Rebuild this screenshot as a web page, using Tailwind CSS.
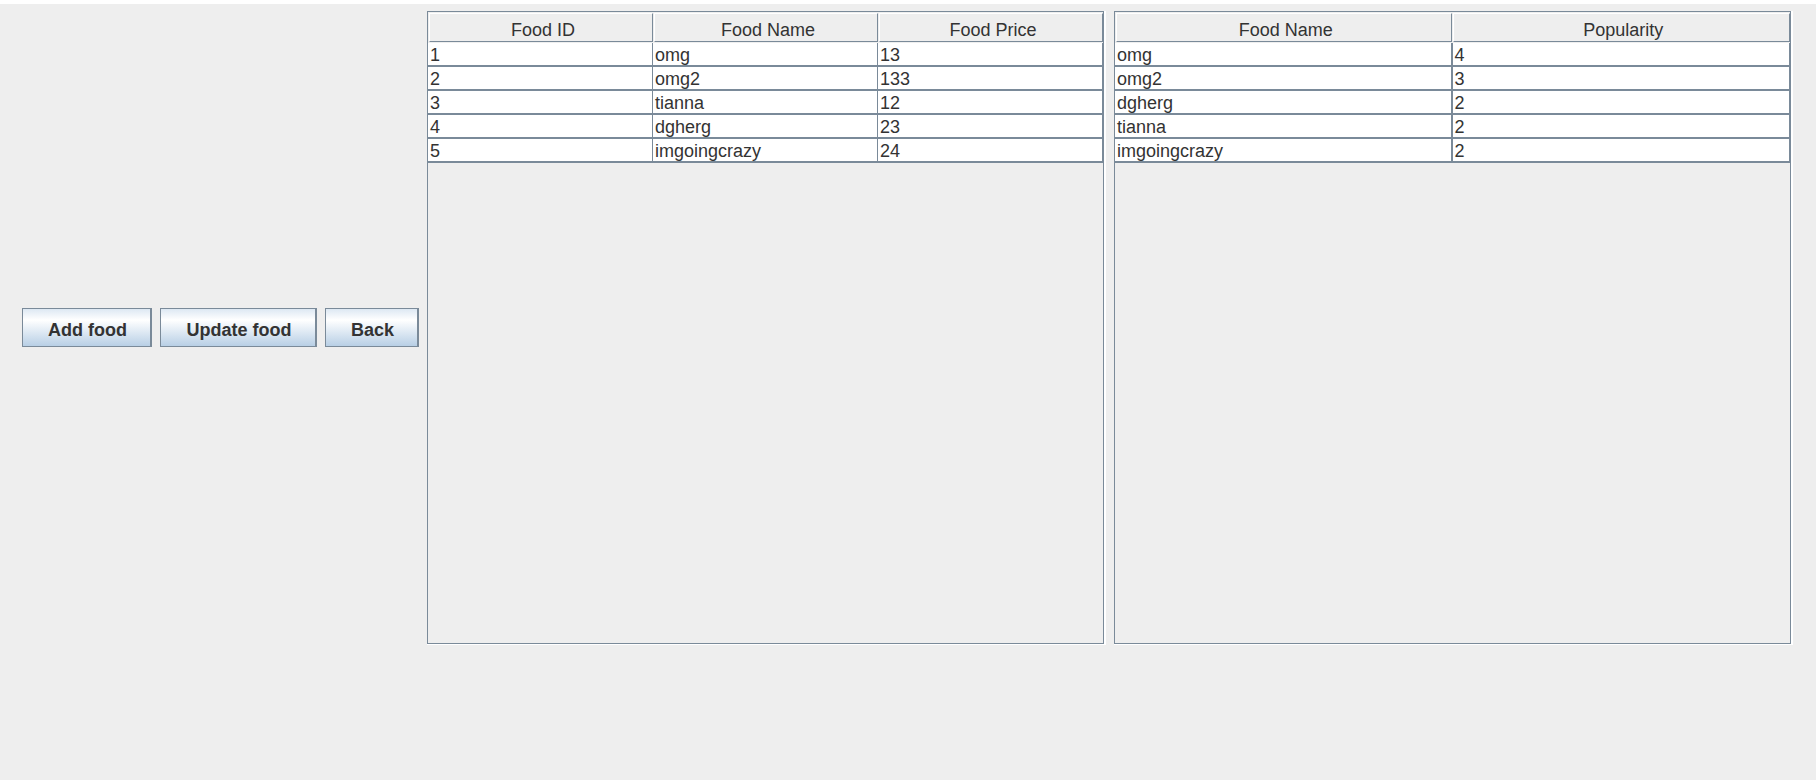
<!DOCTYPE html>
<html lang="en">
<head>
<meta charset="utf-8">
<title>Food management</title>
<script src="https://cdn.jsdelivr.net/npm/@tailwindcss/browser@4"></script>
</head>
<body class="min-h-screen border-t-4 border-white bg-[#eeeeee] font-['Liberation_Sans',Arial,sans-serif] text-lg text-[#333333]">
<main class="flex items-center gap-2 pt-[7px] pr-[23px] pl-[22px]">
  <div class="flex shrink-0 gap-2 pb-px font-bold whitespace-nowrap">
    <button type="button" class="h-[39px] w-[130px] border border-r-2 border-[#7a8a99] bg-linear-to-b from-[#dde8f3] via-white via-30% to-[#b8cfe5] pt-1 pl-0.5 leading-8">Add food</button>
    <button type="button" class="h-[39px] w-[157px] border border-r-2 border-[#7a8a99] bg-linear-to-b from-[#dde8f3] via-white via-30% to-[#b8cfe5] pt-1 pl-0.5 leading-8">Update food</button>
    <button type="button" class="h-[39px] w-[94px] border border-r-2 border-[#7a8a99] bg-linear-to-b from-[#dde8f3] via-white via-30% to-[#b8cfe5] pt-1 pl-0.5 leading-8">Back</button>
  </div>

  <section aria-label="Food list" class="min-w-0 flex-1 border-r-2 border-b border-white">
    <div class="h-[633px] border border-[#7a8a99]">
      <table class="w-full table-fixed border-separate border-spacing-0">
        <thead>
          <tr class="h-[31px]">
            <th scope="col" class="p-0 pt-px align-top font-normal"><div class="ml-px h-[29px] border border-t-white border-r-[#7a8a99] border-b-[#7a8a99] border-l-white pt-[3px] pl-1 leading-[26px]">Food ID</div></th>
            <th scope="col" class="p-0 pt-px align-top font-normal"><div class="ml-px h-[29px] border border-t-white border-r-[#7a8a99] border-b-[#7a8a99] border-l-white pt-[3px] pl-1 leading-[26px]">Food Name</div></th>
            <th scope="col" class="p-0 pt-px align-top font-normal"><div class="ml-px h-[29px] border border-t-white border-r-[#7a8a99] border-b-[#7a8a99] border-l-white pt-[3px] pl-1 leading-[26px]">Food Price</div></th>
          </tr>
        </thead>
        <tbody class="bg-white leading-5 [&_td]:border-r [&_td]:border-b-2 [&_td]:border-[#7a8a99] [&_td]:p-0 [&_td]:pt-0.5 [&_td]:pl-0.5">
          <tr><td>1</td><td>omg</td><td>13</td></tr>
          <tr><td>2</td><td>omg2</td><td>133</td></tr>
          <tr><td>3</td><td>tianna</td><td>12</td></tr>
          <tr><td>4</td><td>dgherg</td><td>23</td></tr>
          <tr><td>5</td><td>imgoingcrazy</td><td>24</td></tr>
        </tbody>
      </table>
    </div>
  </section>

  <section aria-label="Food popularity" class="min-w-0 flex-1 border-r-2 border-b border-white">
    <div class="h-[633px] border border-[#7a8a99]">
      <table class="w-full table-fixed border-separate border-spacing-0">
        <thead>
          <tr class="h-[31px]">
            <th scope="col" class="p-0 pt-px align-top font-normal"><div class="mx-px h-[29px] border border-t-white border-r-[#7a8a99] border-b-[#7a8a99] border-l-white pt-[3px] pl-1 leading-[26px]">Food Name</div></th>
            <th scope="col" class="p-0 pt-px align-top font-normal"><div class="h-[29px] border border-t-white border-r-[#7a8a99] border-b-[#7a8a99] border-l-white pt-[3px] pl-1 leading-[26px]">Popularity</div></th>
          </tr>
        </thead>
        <tbody class="bg-white leading-5 [&_td]:border-r [&_td]:border-b-2 [&_td]:border-[#7a8a99] [&_td]:p-0 [&_td]:pt-0.5 [&_td]:pl-0.5 [&_td:first-child]:border-r-2">
          <tr><td>omg</td><td>4</td></tr>
          <tr><td>omg2</td><td>3</td></tr>
          <tr><td>dgherg</td><td>2</td></tr>
          <tr><td>tianna</td><td>2</td></tr>
          <tr><td>imgoingcrazy</td><td>2</td></tr>
        </tbody>
      </table>
    </div>
  </section>
</main>
</body>
</html>
